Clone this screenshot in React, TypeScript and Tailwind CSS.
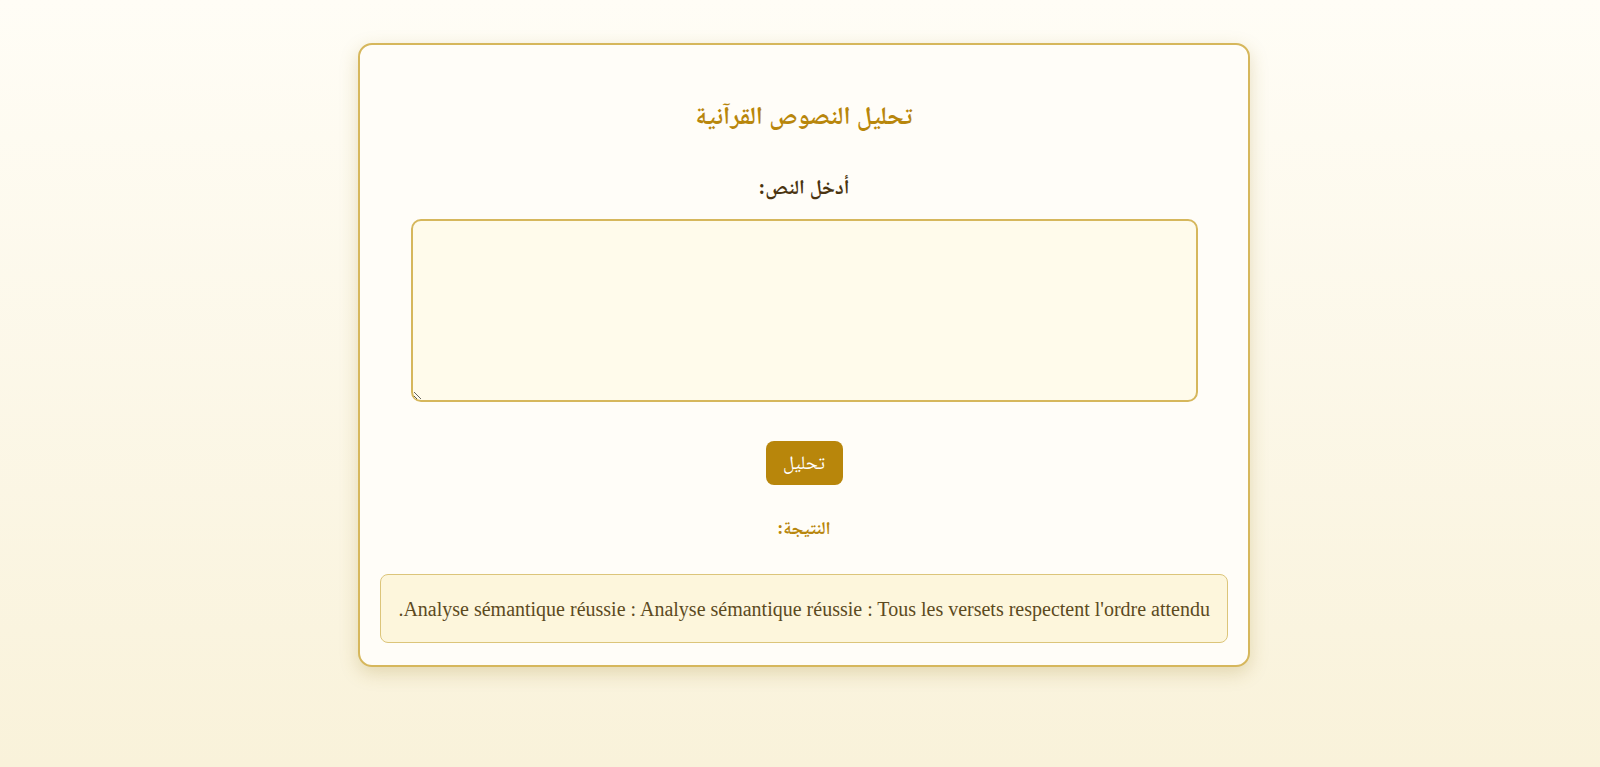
import { useState } from "react";

export default function App() {
  const [text, setText] = useState("");
  const result =
    "Analyse sémantique réussie : Analyse sémantique réussie : Tous les versets respectent l'ordre attendu.";

  return (
    <div
      dir="rtl"
      className="min-h-[767px] bg-gradient-to-b from-[#fffdf6] to-[#f9f2da] pt-[43px] pb-10 flex justify-center pl-[8px]"
      style={{ fontFamily: '"Liberation Serif", "Noto Naskh Arabic", "Noto Serif Arabic", "Amiri", "Noto Sans Arabic", "DejaVu Sans", serif' }}
    >
      <div className="w-[892px] h-fit bg-[#fffdf8] border-2 border-[#d6b75c] rounded-[14px] px-[20px] pt-[50px] pb-[22px] shadow-[0_6px_18px_rgba(160,130,40,0.25)] flex flex-col items-center">
        <h2 className="h-[42px] leading-[42px] text-[25px] font-bold text-[#b8860b]">
          تحليل النصوص القرآنية
        </h2>

        <label className="mt-[35px] h-[30px] leading-[30px] text-[20px] font-bold text-[#4a3410]">
          أدخل النص:
        </label>

        <textarea
          value={text}
          onChange={(e) => setText(e.target.value)}
          className="mt-[17px] w-[787px] h-[183px] p-[10px] border-2 border-[#d6b75c] rounded-[10px] bg-[#fffbeb] text-[18px] text-[#4a3410] outline-none"
        />

        <button className="mt-[39px] w-[77px] h-[44px] rounded-[8px] bg-[#b8860b] text-white text-[19px]">
          تحليل
        </button>

        <h3 className="mt-[28px] h-[30px] leading-[30px] text-[18px] font-bold text-[#b8860b]">
          النتيجة:
        </h3>

        <div className="mt-[31px] w-full h-[69px] flex items-center px-[17px] border border-[#dcc57a] rounded-[8px] bg-[#fdf6dc] text-[20px] text-[#5c4a1e] whitespace-nowrap overflow-hidden">
          {result}
        </div>
      </div>
    </div>
  );
}
